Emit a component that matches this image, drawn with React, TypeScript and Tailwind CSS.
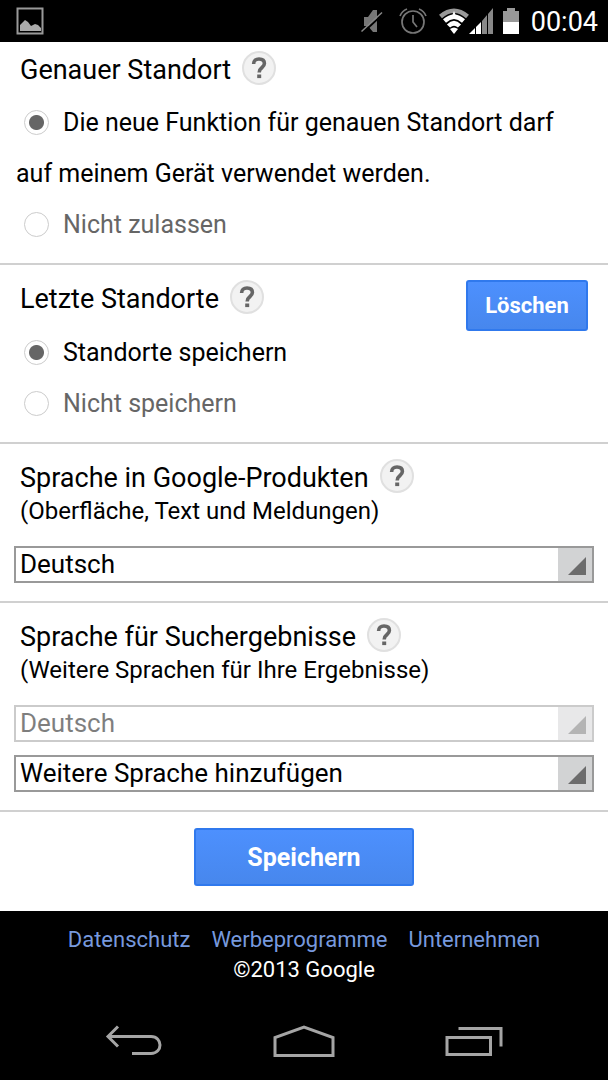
import { useState } from 'react';
import type { ReactNode } from 'react';

interface RadioOptionProps {
    name: string;
    label: string;
    checked: boolean;
    onSelect: () => void;
}

interface LanguageSelectProps {
    id: string;
    label: string;
    options: string[];
    disabled?: boolean;
}

const HelpButton = () => (
    <button
        type="button"
        aria-label="Hilfe"
        className="flex size-[34px] shrink-0 items-center justify-center rounded-full border-2 border-[#e0e0e0] bg-[#f2f2f2]"
    >
        <svg viewBox="0 0 16 22" className="h-[22px] w-4" fill="none" stroke="#666" strokeWidth="3.6">
            <path d="M2.6 7C2.6 3.7 4.7 2 8 2s5.4 1.7 5.4 4.5c0 2.3-1.3 3.2-2.9 4.5C8.900 12.200 8.200 13 8.200 15.400" />
            <path d="M6.200 19.300h4" />
        </svg>
    </button>
);

const Heading = ({ children }: { children: ReactNode }) => (
    <div className="flex items-center gap-[11px] pl-5">
        <h2 className="pt-1 text-[27px] leading-[30px]">{children}</h2>
        <HelpButton />
    </div>
);

const RadioOption = ({ name, label, checked, onSelect }: RadioOptionProps) => (
    <label className={`block px-4 text-[25px] leading-[51px] ${checked ? 'text-black' : 'text-[#666]'}`}>
        <input
            type="radio"
            name={name}
            checked={checked}
            onChange={onSelect}
            className="mr-[14px] ml-2 inline-block size-[25px] appearance-none rounded-full border border-[#ccc] bg-white bg-clip-padding align-[-4px] checked:bg-[radial-gradient(circle,#666_0_7px,#fff_8px)]"
        />
        {label}
    </label>
);

const LanguageSelect = ({ id, label, options, disabled = false }: LanguageSelectProps) => (
    <div className={`relative mx-[14px] h-[37px] ${disabled ? 'opacity-50' : ''}`}>
        <select
            id={id}
            aria-label={label}
            disabled={disabled}
            className="block h-full w-full appearance-none border-2 border-[#999] bg-white pr-10 pl-1 text-[26px] leading-[33px] text-black opacity-100"
        >
            {options.map((option) => (
                <option key={option}>{option}</option>
            ))}
        </select>
        <div className="pointer-events-none absolute inset-y-[2px] right-[2px] w-[34px] bg-[#d2d3d4]">
            <svg viewBox="0 0 34 33" className="h-full w-full" fill="#6c6c6c">
                <path d="M28 9v18H10z" />
            </svg>
        </div>
    </div>
);

const StatusBar = () => (
    <header className="flex h-[42px] items-center bg-black pr-[10px] pl-4 text-white">
        <svg viewBox="0 0 28 28" className="size-7" fill="none">
            <path d="M1.500 1.500h25v25h-25z" stroke="#999" strokeWidth="2" />
            <path d="M4 24v-6l5-5 3 2 3 4 4-2 3 1 3 3v3z" fill="#aaa" />
        </svg>
        <div className="ml-auto flex items-center">
            <svg viewBox="0 0 22 24" className="h-6 w-[22px]">
                <path d="M3 8h4l5-7h4v22h-4l-5-6H3z" fill="#777" />
                <path d="M1.500 24 22 5" stroke="#000" strokeWidth="2" />
                <path d="M.5 22.500 21 3.500" stroke="#888" strokeWidth="1.500" />
            </svg>
            <svg viewBox="0 0 28 26" className="ml-4 h-[26px] w-7" fill="none" stroke="#777" strokeWidth="1.700">
                <circle cx="14" cy="14" r="11" />
                <path d="M14 7v7l4 5M1 8q2-5 7-7M20 1q5 2 7 7" />
            </svg>
            <svg viewBox="0 0 30 26" className="ml-3 h-[26px] w-[30px]" fill="none" strokeWidth="4.500">
                <path d="M1.500 8.500Q15-3 28.500 8.500" stroke="#999" />
                <path d="M5.500 13Q15 4.500 24.500 13M9.500 18Q15 12.500 20.500 18" stroke="#fff" />
                <path d="M15 26l-4-5q4-3 8 0z" fill="#fff" />
                <path d="M12.500 9 15 3l2.500 6z" fill="#fff" />
            </svg>
            <svg viewBox="0 0 25 26" className="h-[26px] w-[25px]">
                <path d="M0 26 6 20v6z" fill="#fff" />
                <path d="M7 19l5-5v12H7z" fill="#fff" />
                <path d="M13 13l5-6v19h-5zM19 6l5-6v26h-5z" fill="#888" />
            </svg>
            <svg viewBox="0 0 16 26" className="ml-[9px] h-[26px] w-4">
                <path d="M0 3h4V0h8v3h4v11H0z" fill="#999" />
                <path d="M0 14h16v12H0z" fill="#fff" />
            </svg>
            <span className="ml-3 pt-[2px] text-[27px] leading-[40px]">00:04</span>
        </div>
    </header>
);

const NavigationBar = () => (
    <nav className="mt-[30px] flex h-[60px] items-center justify-around px-[50px] pb-2">
        <button type="button" aria-label="Zurück">
            <svg viewBox="0 0 58 34" className="h-[34px] w-[58px]" fill="none" stroke="#a5a5a5" strokeWidth="3">
                <path d="M3 12.500h43c12 0 12 17 0 17H27M13 2.500 3 12.500l10 10" />
            </svg>
        </button>
        <button type="button" aria-label="Startseite">
            <svg viewBox="0 0 62 34" className="h-[34px] w-[62px]" fill="none" stroke="#a5a5a5" strokeWidth="3">
                <path d="M2 31.500V13.500L31 3l29 10.500v18z" />
            </svg>
        </button>
        <button type="button" aria-label="Letzte Apps">
            <svg viewBox="0 0 58 34" className="h-[34px] w-[58px]" fill="none" stroke="#a5a5a5" strokeWidth="3">
                <path d="M2 13.500h43.500v17H2zM13.500 4.500h42.500v18" />
            </svg>
        </button>
    </nav>
);

export default function App() {
    const [allowLocation, setAllowLocation] = useState(true);
    const [saveLocations, setSaveLocations] = useState(true);

    return (
        <div className="min-h-screen bg-black font-[Roboto,sans-serif]">
            <StatusBar />

            <main className="bg-white text-black">
                <form onSubmit={(e) => e.preventDefault()}>
                    <section className="border-b-2 border-[#d0d0d0] pt-[9px] pb-[13px]">
                        <Heading>Genauer Standort</Heading>
                        <div className="pt-3">
                            <RadioOption
                                name="precise"
                                label="Die neue Funktion für genauen Standort darf auf meinem Gerät verwendet werden."
                                checked={allowLocation}
                                onSelect={() => setAllowLocation(true)}
                            />
                            <RadioOption
                                name="precise"
                                label="Nicht zulassen"
                                checked={!allowLocation}
                                onSelect={() => setAllowLocation(false)}
                            />
                        </div>
                    </section>

                    <section className="border-b-2 border-[#d0d0d0] pt-[15px] pb-[13px]">
                        <div className="flex h-[47px] items-start justify-between pr-5">
                            <Heading>Letzte Standorte</Heading>
                            <button
                                type="button"
                                className="h-[51px] w-[122px] shrink-0 rounded-[3px] border-2 border-[#3079ed] bg-linear-to-b from-[#4d90fe] to-[#4787ed] text-[22px] font-bold text-white"
                            >
                                Löschen
                            </button>
                        </div>
                        <RadioOption
                            name="recent"
                            label="Standorte speichern"
                            checked={saveLocations}
                            onSelect={() => setSaveLocations(true)}
                        />
                        <RadioOption
                            name="recent"
                            label="Nicht speichern"
                            checked={!saveLocations}
                            onSelect={() => setSaveLocations(false)}
                        />
                    </section>

                    <section className="border-b-2 border-[#d0d0d0] pt-[15px] pb-[18px]">
                        <Heading>Sprache in Google-Produkten</Heading>
                        <p className="pt-[2px] pb-[18px] pl-5 text-[24px] leading-[33px]">
                            (Oberfläche, Text und Meldungen)
                        </p>
                        <LanguageSelect
                            id="ui-language"
                            label="Sprache in Google-Produkten"
                            options={['Deutsch', 'English']}
                        />
                    </section>

                    <section className="border-b-2 border-[#d0d0d0] pt-[15px] pb-[18px]">
                        <Heading>Sprache für Suchergebnisse</Heading>
                        <p className="pt-[2px] pb-[18px] pl-5 text-[24px] leading-[33px]">
                            (Weitere Sprachen für Ihre Ergebnisse)
                        </p>
                        <div className="space-y-[13px]">
                            <LanguageSelect
                                id="result-language"
                                label="Sprache für Suchergebnisse"
                                options={['Deutsch']}
                                disabled
                            />
                            <LanguageSelect
                                id="more-language"
                                label="Weitere Sprache"
                                options={['Weitere Sprache hinzufügen', 'English']}
                            />
                        </div>
                    </section>

                    <div className="flex justify-center pt-4 pb-[25px]">
                        <button
                            type="submit"
                            className="h-[58px] w-[220px] rounded-[3px] border-2 border-[#3079ed] bg-linear-to-b from-[#4d90fe] to-[#4787ed] pt-[2px] text-[25px] font-bold text-white"
                        >
                            Speichern
                        </button>
                    </div>
                </form>
            </main>

            <footer className="bg-black pt-[14px] text-center text-[22px] leading-[30px] text-white">
                <div className="flex justify-center gap-[21px] text-[#7799dd]">
                    <a href="#datenschutz">Datenschutz</a>
                    <a href="#werbeprogramme">Werbeprogramme</a>
                    <a href="#unternehmen">Unternehmen</a>
                </div>
                <p>©2013 Google</p>
            </footer>

            <NavigationBar />
        </div>
    );
}
